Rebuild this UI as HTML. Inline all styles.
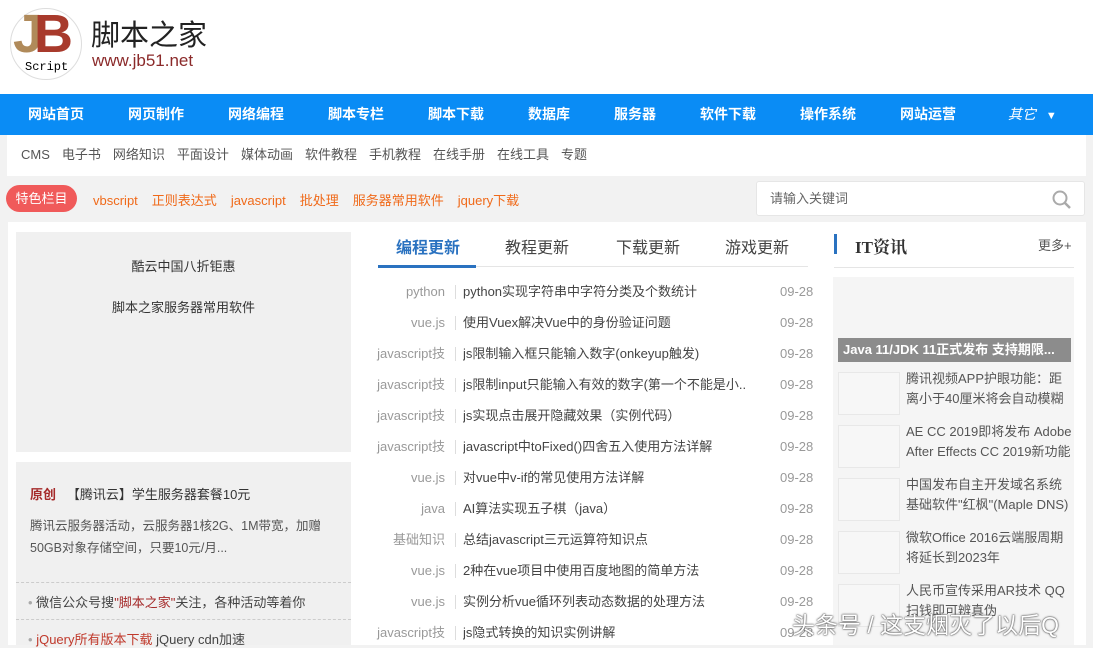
<!DOCTYPE html><html><head><meta charset="utf-8"><style>
*{margin:0;padding:0;box-sizing:border-box}
body{width:1093px;height:645px;overflow:hidden;background:#f2f2f2;font-family:"Liberation Sans","Noto Sans CJK SC",sans-serif;position:relative;font-size:13px;color:#333}
.a{position:absolute}
.nav a{position:absolute;top:0;line-height:41px;color:#fff;font-size:14px;font-weight:bold}
.sub span{margin-right:12px;color:#555}
.sp span{margin-right:14px;color:#f06a1a}
.row{position:absolute;left:360px;width:460px;height:31px;line-height:31px;font-size:13px}
.row .c{position:absolute;right:375px;color:#999;text-align:right;width:90px;white-space:nowrap}
.row .bar{position:absolute;left:95px;top:9px;height:14px;border-left:1px solid #ddd}
.row .t{position:absolute;left:103px;color:#444;white-space:nowrap;width:310px;overflow:hidden}
.row .d{position:absolute;left:420px;color:#999}
.it{position:absolute;left:838px;width:240px;height:50px}
.it .th{position:absolute;left:0;top:0;width:62px;height:43px;background:#f7f7f7;border:1px solid #e8e8e8}
.it .tx{position:absolute;left:68px;top:-3px;width:168px;line-height:20px;color:#555;font-size:13px}
</style></head><body>
<div class="a" style="left:0;top:0;width:1093px;height:94px;background:#fff"></div>
<div class="a" style="left:10px;top:8px;width:72px;height:72px;border-radius:50%;border:1px solid #ddd;background:#fff"></div>
<div class="a" style="left:13px;top:6px;font:bold 54px/56px 'Liberation Sans',sans-serif;letter-spacing:-9px"><span style="color:#b08a5a">J</span><span style="color:#a83a2c">B</span></div>
<div class="a" style="left:25px;top:60px;font:12px 'Liberation Mono',monospace;color:#000">Script</div>
<div class="a" style="left:91px;top:17px;font-size:29px;color:#222;line-height:38px">脚本之家</div>
<div class="a" style="left:92px;top:51px;font-size:17px;color:#8b2a2a">www.jb51.net</div>
<div class="a nav" style="left:0;top:94px;width:1093px;height:41px;background:#0a8cf5">
<a style="left:28px">网站首页</a><a style="left:128px">网页制作</a><a style="left:228px">网络编程</a><a style="left:328px">脚本专栏</a><a style="left:428px">脚本下载</a><a style="left:528px">数据库</a><a style="left:614px">服务器</a><a style="left:700px">软件下载</a><a style="left:800px">操作系统</a><a style="left:900px">网站运营</a><a style="left:1008px;font-style:italic;font-weight:normal">其它 <span style="font-size:11px;font-style:normal;margin-left:6px">▼</span></a></div>
<div class="a sub" style="left:7px;top:135px;width:1079px;height:41px;background:#fff;line-height:40px;padding-left:14px;font-size:13px"><span>CMS</span><span>电子书</span><span>网络知识</span><span>平面设计</span><span>媒体动画</span><span>软件教程</span><span>手机教程</span><span>在线手册</span><span>在线工具</span><span>专题</span></div>
<div class="a" style="left:6px;top:185px;width:71px;height:27px;border-radius:14px;background:#f05a5a;color:#fff;line-height:27px;text-align:center;font-size:13px">特色栏目</div>
<div class="a sp" style="left:93px;top:190px;font-size:13px"><span>vbscript</span><span>正则表达式</span><span>javascript</span><span>批处理</span><span>服务器常用软件</span><span>jquery下载</span></div>
<div class="a" style="left:756px;top:181px;width:329px;height:35px;background:#fff;border:1px solid #e6e6e6;border-radius:3px;line-height:33px;padding-left:13px;color:#666">请输入关键词
<svg style="position:absolute;right:12px;top:8px" width="20" height="20"><circle cx="8" cy="8" r="6.5" fill="none" stroke="#aaa" stroke-width="2"/><line x1="13" y1="13" x2="18" y2="18" stroke="#aaa" stroke-width="2.5"/></svg></div>
<div class="a" style="left:8px;top:222px;width:1078px;height:423px;background:#fff"></div>
<div class="a" style="left:16px;top:232px;width:335px;height:220px;background:#f0f0f0;text-align:center;color:#333;font-size:13px"><div style="margin-top:24px">酷云中国八折钜惠</div><div style="margin-top:22px">脚本之家服务器常用软件</div></div>
<div class="a" style="left:16px;top:462px;width:335px;height:183px;background:#f0f0f0"></div>
<div class="a" style="left:30px;top:484px;font-size:13px"><b style="color:#a52a2a">原创</b>&nbsp;&nbsp;&nbsp;【腾讯云】学生服务器套餐10元</div>
<div class="a" style="left:30px;top:515px;width:310px;font-size:12.5px;line-height:22px;color:#555">腾讯云服务器活动，云服务器1核2G、1M带宽，加赠50GB对象存储空间，只要10元/月...</div>
<div class="a" style="left:16px;top:582px;width:335px;border-top:1px dashed #ccc"></div>
<div class="a" style="left:28px;top:592px;font-size:13px;color:#444"><span style="color:#aaa">•</span> 微信公众号搜<span style="color:#a52a2a">"脚本之家"</span>关注，各种活动等着你</div>
<div class="a" style="left:16px;top:619px;width:335px;border-top:1px dashed #ccc"></div>
<div class="a" style="left:28px;top:629px;font-size:13px;color:#444"><span style="color:#aaa">•</span> <span style="color:#c0392b">jQuery所有版本下载</span> jQuery cdn加速</div>
<div class="a" style="left:378px;top:266px;width:430px;border-top:1px solid #e5e5e5"></div>
<div class="a" style="left:378px;top:265px;width:98px;border-top:3px solid #2a72c0"></div>
<div class="a" style="left:396px;top:234px;font-size:16px;color:#2a72c0;font-weight:bold">编程更新</div>
<div class="a" style="left:505px;top:234px;font-size:16px;color:#444">教程更新</div>
<div class="a" style="left:616px;top:234px;font-size:16px;color:#444">下载更新</div>
<div class="a" style="left:725px;top:234px;font-size:16px;color:#444">游戏更新</div>
<div class="row" style="top:276px"><span class="c">python</span><span class="bar"></span><span class="t">python实现字符串中字符分类及个数统计</span><span class="d">09-28</span></div>
<div class="row" style="top:307px"><span class="c">vue.js</span><span class="bar"></span><span class="t">使用Vuex解决Vue中的身份验证问题</span><span class="d">09-28</span></div>
<div class="row" style="top:338px"><span class="c">javascript技</span><span class="bar"></span><span class="t">js限制输入框只能输入数字(onkeyup触发)</span><span class="d">09-28</span></div>
<div class="row" style="top:369px"><span class="c">javascript技</span><span class="bar"></span><span class="t">js限制input只能输入有效的数字(第一个不能是小..</span><span class="d">09-28</span></div>
<div class="row" style="top:400px"><span class="c">javascript技</span><span class="bar"></span><span class="t">js实现点击展开隐藏效果（实例代码）</span><span class="d">09-28</span></div>
<div class="row" style="top:431px"><span class="c">javascript技</span><span class="bar"></span><span class="t">javascript中toFixed()四舍五入使用方法详解</span><span class="d">09-28</span></div>
<div class="row" style="top:462px"><span class="c">vue.js</span><span class="bar"></span><span class="t">对vue中v-if的常见使用方法详解</span><span class="d">09-28</span></div>
<div class="row" style="top:493px"><span class="c">java</span><span class="bar"></span><span class="t">AI算法实现五子棋（java）</span><span class="d">09-28</span></div>
<div class="row" style="top:524px"><span class="c">基础知识</span><span class="bar"></span><span class="t">总结javascript三元运算符知识点</span><span class="d">09-28</span></div>
<div class="row" style="top:555px"><span class="c">vue.js</span><span class="bar"></span><span class="t">2种在vue项目中使用百度地图的简单方法</span><span class="d">09-28</span></div>
<div class="row" style="top:586px"><span class="c">vue.js</span><span class="bar"></span><span class="t">实例分析vue循环列表动态数据的处理方法</span><span class="d">09-28</span></div>
<div class="row" style="top:617px"><span class="c">javascript技</span><span class="bar"></span><span class="t">js隐式转换的知识实例讲解</span><span class="d">09-28</span></div>
<div class="a" style="left:834px;top:234px;width:3px;height:20px;background:#2a72c0"></div>
<div class="a" style="left:855px;top:233px;font-size:17px;font-weight:bold;color:#333;font-family:'Liberation Serif','Noto Serif CJK SC',serif">IT资讯</div>
<div class="a" style="left:1038px;top:235px;font-size:13px;color:#555">更多+</div>
<div class="a" style="left:834px;top:267px;width:240px;border-top:1px solid #e5e5e5"></div>
<div class="a" style="left:833px;top:277px;width:241px;height:368px;background:#f5f5f5"></div>
<div class="a" style="left:838px;top:338px;width:233px;height:24px;background:#8c8c8c;color:#fff;font-weight:bold;font-size:13px;line-height:24px;padding-left:5px;white-space:nowrap;overflow:hidden">Java 11/JDK 11正式发布 支持期限...</div>
<div class="it" style="top:372px"><div class="th"></div><div class="tx">腾讯视频APP护眼功能：距离小于40厘米将会自动模糊</div></div>
<div class="it" style="top:425px"><div class="th"></div><div class="tx">AE CC 2019即将发布 Adobe After Effects CC 2019新功能</div></div>
<div class="it" style="top:478px"><div class="th"></div><div class="tx">中国发布自主开发域名系统基础软件"红枫"(Maple DNS)</div></div>
<div class="it" style="top:531px"><div class="th"></div><div class="tx">微软Office 2016云端服周期将延长到2023年</div></div>
<div class="it" style="top:584px"><div class="th"></div><div class="tx">人民币宣传采用AR技术 QQ扫钱即可辨真伪</div></div>
<div class="a" style="left:792px;top:606px;font-size:23px;color:#fff;text-shadow:0 0 2px #444,0 0 1px #222">头条号 / 这支烟灭了以后Q</div>
</body></html>
